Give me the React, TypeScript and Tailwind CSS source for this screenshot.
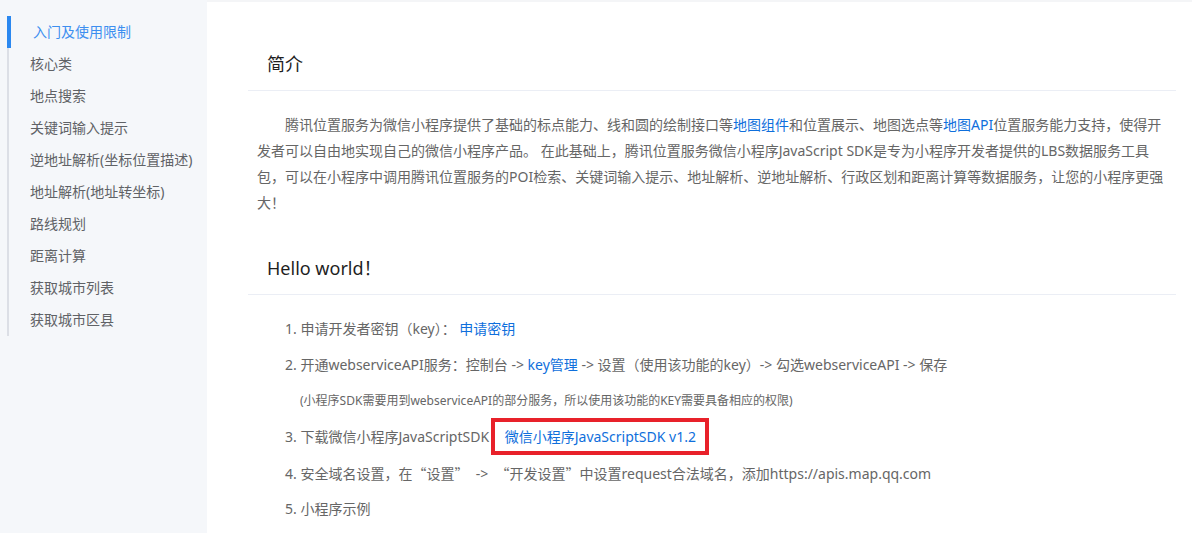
import React from 'react';

interface NavItem {
  label: string;
  active?: boolean;
}

const navItems: NavItem[] = [
  { label: '入门及使用限制', active: true },
  { label: '核心类' },
  { label: '地点搜索' },
  { label: '关键词输入提示' },
  { label: '逆地址解析(坐标位置描述)' },
  { label: '地址解析(地址转坐标)' },
  { label: '路线规划' },
  { label: '距离计算' },
  { label: '获取城市列表' },
  { label: '获取城市区县' },
];

const font = { fontFamily: '"Noto Sans", "Noto Sans CJK SC", sans-serif' };
const cjk = { fontFamily: '"Noto Sans CJK SC", sans-serif' };

function Link({ children }: { children: React.ReactNode }) {
  return <a href="#" className="text-[#0f6fdc] no-underline">{children}</a>;
}

function Sidebar() {
  return (
    <aside className="w-[207px] shrink-0 bg-[#f5f7fa] pt-4">
      <ul className="ml-[7px] border-l-2 border-[#dcdfe6]">
        {navItems.map((item) => (
          <li
            key={item.label}
            className={`relative h-8 leading-8 text-[14px] ${item.active ? 'pl-6 text-[#3d8ff0]' : 'pl-[21px] text-[#606266]'}`}
          >
            {item.active && <span className="absolute -left-[2px] top-0 h-8 w-1 bg-[#2b88f0]" />}
            {item.label}
          </li>
        ))}
      </ul>
    </aside>
  );
}

function SectionTitle({ children }: { children: React.ReactNode }) {
  return (
    <h2 className="border-b border-[#ebeef5] pl-[19px] pb-[13px] text-[18px] leading-[26px] text-[#1f1f1f]">
      {children}
    </h2>
  );
}

export default function App() {
  return (
    <div className="flex h-[533px] w-[1192px] overflow-hidden bg-white" style={font}>
      <Sidebar />

      <main className="flex-1 border-t-2 border-[#f4f5f7] pl-[41px] pr-4 pt-[49px]">
        {/* 简介 */}
        <SectionTitle>简介</SectionTitle>
        <p className="mt-[21px] pl-[9px] text-[14px] leading-[26px] text-[#666]">
          <span className="pl-[28px]">腾讯位置服务为微信小程序提供了基础的标点能力、线和圆的绘制接口等</span>
          <Link>地图组件</Link>和位置展示、地图选点等<Link>地图API</Link>位置服务能力支持，使得开
          <br />
          发者可以自由地实现自己的微信小程序产品。 在此基础上，腾讯位置服务微信小程序JavaScript SDK是专为小程序开发者提供的LBS数据服务工具
          <br />
          包，可以在小程序中调用腾讯位置服务的POI检索、关键词输入提示、地址解析、逆地址解析、行政区划和距离计算等数据服务，让您的小程序更强
          <br />
          大！
        </p>

        {/* Hello world */}
        <div className="mt-[38px]">
          <SectionTitle>
            Hello world<span style={cjk}>！</span>
          </SectionTitle>
        </div>
        <ol className="mt-4 pl-[37px] text-[14px] text-[#666]">
          <li className="h-9 leading-9">
            1. 申请开发者密钥（key）： <Link>申请密钥</Link>
          </li>
          <li className="h-9 leading-9">
            2. 开通webserviceAPI服务：控制台 -&gt; <Link>key管理</Link> -&gt; 设置（使用该功能的key）-&gt; 勾选webserviceAPI -&gt; 保存
          </li>
          <li className="h-9 pl-[15px] text-[12px] leading-9">
            (小程序SDK需要用到webserviceAPI的部分服务，所以使用该功能的KEY需要具备相应的权限)
          </li>
          <li className="h-9 leading-9">
            3. 下载微信小程序JavaScriptSDK{' '}
            <span className="relative ml-3">
              <Link>微信小程序JavaScriptSDK v1.2</Link>
              <span className="pointer-events-none absolute -left-[14px] -right-[13px] -top-[9px] -bottom-[9px] border-4 border-[#e8212a]" />
            </span>
          </li>
          <li className="h-9 leading-9">
            4. 安全域名设置，在<span style={cjk}>“设置”</span> &nbsp;-&gt;&nbsp; <span style={cjk}>“开发设置”</span>中设置request合法域名，添加https://apis.map.qq.com
          </li>
          <li className="h-9 leading-9">5. 小程序示例</li>
        </ol>
      </main>
    </div>
  );
}
